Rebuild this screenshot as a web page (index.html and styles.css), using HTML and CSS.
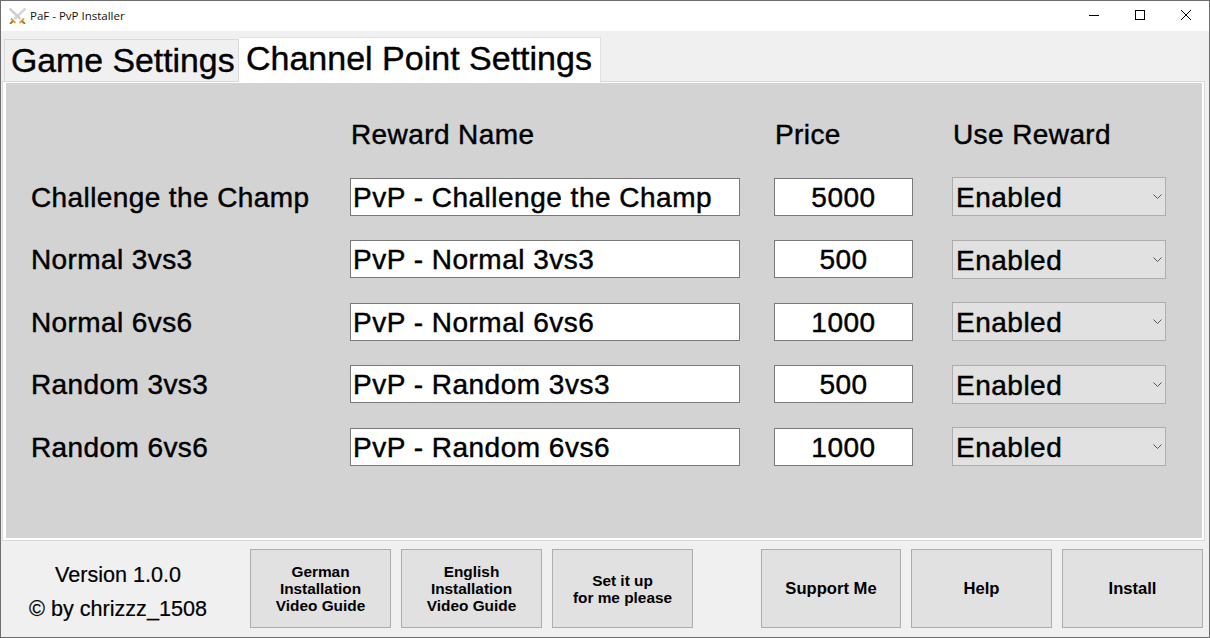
FILE: index.html

```html
<!DOCTYPE html>
<html lang="en">
<head>
  <meta charset="UTF-8">
  <title>PaF - PvP Installer</title>
  <link rel="stylesheet" href="styles.css">
</head>
<body>

  <div class="window">

    <div class="titlebar">
      <svg class="app-icon" width="17" height="16" viewBox="0 0 17 16">
        <path d="M16.5 0.5 L5.5 11" stroke="#d6d6d6" stroke-width="2.6" fill="none"/>
        <path d="M0.5 0.5 L11.5 11" stroke="#cfcfcf" stroke-width="2.6" fill="none"/>
        <path d="M2 10.5 L6.5 15 M15 10.5 L10.5 15" stroke="#dca63a" stroke-width="1.8" fill="none"/>
        <path d="M4 13 L1 16 M13 13 L16 16" stroke="#a9781f" stroke-width="1.8" fill="none"/>
      </svg>
      <span class="title">PaF - PvP Installer</span>
      <div class="win-buttons">
        <svg width="46" height="30" viewBox="0 0 46 30"><path d="M18 14.5 H28" stroke="#000"/></svg>
        <svg width="46" height="30" viewBox="0 0 46 30"><rect x="18.5" y="9.5" width="9" height="9" fill="none" stroke="#000"/></svg>
        <svg width="46" height="30" viewBox="0 0 46 30"><path d="M18 9 L28 19 M28 9 L18 19" stroke="#000" fill="none"/></svg>
      </div>
    </div>

    <div class="tabs">
      <div class="tab">Game Settings</div>
      <div class="tab active">Channel Point Settings</div>
    </div>

    <div class="panel">
      <div class="panel-inner">
        <div class="form-grid">
          <div></div>
          <div class="col-head">Reward Name</div>
          <div class="col-head">Price</div>
          <div class="col-head">Use Reward</div>

          <label class="row-label">Challenge the Champ</label>
          <input class="field" value="PvP - Challenge the Champ">
          <input class="field price" value="5000">
          <div class="select-wrap">
            <select class="select"><option>Enabled</option><option>Disabled</option></select>
            <svg class="chevron" width="9" height="5" viewBox="0 0 9 5"><path d="M0.5 0.5 L4.5 4.5 L8.5 0.5" fill="none" stroke="#555"/></svg>
          </div>

          <label class="row-label">Normal 3vs3</label>
          <input class="field" value="PvP - Normal 3vs3">
          <input class="field price" value="500">
          <div class="select-wrap">
            <select class="select"><option>Enabled</option><option>Disabled</option></select>
            <svg class="chevron" width="9" height="5" viewBox="0 0 9 5"><path d="M0.5 0.5 L4.5 4.5 L8.5 0.5" fill="none" stroke="#555"/></svg>
          </div>

          <label class="row-label">Normal 6vs6</label>
          <input class="field" value="PvP - Normal 6vs6">
          <input class="field price" value="1000">
          <div class="select-wrap">
            <select class="select"><option>Enabled</option><option>Disabled</option></select>
            <svg class="chevron" width="9" height="5" viewBox="0 0 9 5"><path d="M0.5 0.5 L4.5 4.5 L8.5 0.5" fill="none" stroke="#555"/></svg>
          </div>

          <label class="row-label">Random 3vs3</label>
          <input class="field" value="PvP - Random 3vs3">
          <input class="field price" value="500">
          <div class="select-wrap">
            <select class="select"><option>Enabled</option><option>Disabled</option></select>
            <svg class="chevron" width="9" height="5" viewBox="0 0 9 5"><path d="M0.5 0.5 L4.5 4.5 L8.5 0.5" fill="none" stroke="#555"/></svg>
          </div>

          <label class="row-label">Random 6vs6</label>
          <input class="field" value="PvP - Random 6vs6">
          <input class="field price" value="1000">
          <div class="select-wrap">
            <select class="select"><option>Enabled</option><option>Disabled</option></select>
            <svg class="chevron" width="9" height="5" viewBox="0 0 9 5"><path d="M0.5 0.5 L4.5 4.5 L8.5 0.5" fill="none" stroke="#555"/></svg>
          </div>
        </div>
      </div>
    </div>

    <div class="footer">
      <div class="version">
        <div>Version 1.0.0</div>
        <div>© by chrizzz_1508</div>
      </div>
      <button class="btn">German<br>Installation<br>Video Guide</button>
      <button class="btn">English<br>Installation<br>Video Guide</button>
      <button class="btn">Set it up<br>for me please</button>
      <button class="btn big push">Support Me</button>
      <button class="btn big">Help</button>
      <button class="btn big">Install</button>
    </div>

  </div>

</body>
</html>
```

FILE: styles.css

```css
html, body {
  margin: 0;
  padding: 0;
}
body {
  width: 1210px;
  height: 638px;
  overflow: hidden;
  font-family: "Liberation Sans", Arial, sans-serif;
  color: #000;
}
.window {
  box-sizing: border-box;
  width: 1210px;
  height: 638px;
  border: 1px solid #6e6e6e;
  background: #f0f0f0;
  display: flex;
  flex-direction: column;
}

/* title bar */
.titlebar {
  height: 30px;
  background: #fff;
  display: flex;
  align-items: center;
  padding-left: 8px;
}
.app-icon {
  margin-right: 4px;
}
.title {
  font-family: "Open Sans", sans-serif;
  font-size: 11.5px;
  color: #111;
  margin-top: -2px;
}
.win-buttons {
  margin-left: auto;
  display: flex;
}
.win-buttons svg {
  display: block;
}

/* tabs */
.tabs {
  height: 50px;
  display: flex;
  align-items: flex-end;
  padding-left: 3px;
}
.tab {
  box-sizing: border-box;
  height: 43px;
  width: 235px;
  margin-bottom: -1px;
  border: 1px solid #d9d9d9;
  background: #f0f0f0;
  font-size: 33.8px;
  line-height: 41px;
  padding-left: 6px;
  white-space: nowrap;
  -webkit-text-stroke: 0.4px #000;
}
.tab.active {
  position: relative;
  height: 46px;
  width: 362px;
  margin-bottom: -2px;
  background: #fff;
  border-bottom: 0;
  border-left: 0;
  border-color: #e0e0e0;
  font-size: 34px;
  line-height: 41px;
  padding-left: 7px;
}

/* main panel */
.panel {
  margin: 0 4px 0 1px;
  height: 460px;
  box-sizing: border-box;
  border: 1px solid #d9d9d9;
  background: #fff;
  padding: 1px 2px 2px 3px;
}
.panel-inner {
  height: 100%;
  background: #d3d3d3;
  box-sizing: border-box;
  padding: 32px 0 0 25px;
}
.form-grid {
  display: grid;
  grid-template-columns: 319px 424px 178px 214px;
  row-gap: 24.5px;
  grid-auto-rows: 38px;
  align-items: center;
}
.col-head, .row-label {
  font-size: 28px;
  letter-spacing: 0.4px;
  white-space: nowrap;
  -webkit-text-stroke: 0.45px #000;
}
.col-head {
  padding: 1px 0 0 1px;
}
.row-label {
  padding-top: 2px;
}
.field {
  box-sizing: border-box;
  width: 390px;
  height: 38px;
  border: 1px solid #7a7a7a;
  border-radius: 0;
  background: #fff;
  padding: 2px 2px 0;
  margin: 0;
  font-family: "Liberation Sans", Arial, sans-serif;
  font-size: 28px;
  letter-spacing: 0.5px;
  -webkit-text-stroke: 0.45px #000;
  color: #000;
  outline: none;
}
.field.price {
  width: 139px;
  text-align: center;
}
.select-wrap {
  position: relative;
  width: 214px;
  height: 39px;
}
.select {
  appearance: none;
  box-sizing: border-box;
  display: block;
  width: 214px;
  height: 39px;
  border: 1px solid #adadad;
  border-radius: 0;
  background: #e1e1e1;
  padding: 2px 0 0 3px;
  margin: 0;
  font-family: "Liberation Sans", Arial, sans-serif;
  font-size: 28px;
  letter-spacing: 0.5px;
  -webkit-text-stroke: 0.45px #000;
  color: #000;
  outline: none;
}
.chevron {
  position: absolute;
  right: 4px;
  top: 17px;
  pointer-events: none;
}

/* footer */
.footer {
  flex: 1;
  display: flex;
  align-items: flex-start;
  padding: 8px 6px 0 0;
  gap: 10px;
}
.version {
  width: 234px;
  margin-right: 5px;
  font-size: 21.6px;
  line-height: 34px;
  text-align: center;
  padding-top: 9px;
  -webkit-text-stroke: 0.2px #000;
}
.btn {
  box-sizing: border-box;
  width: 141px;
  height: 79px;
  border: 1px solid #adadad;
  border-radius: 0;
  background: #e1e1e1;
  padding: 0;
  font-family: "Liberation Sans", Arial, sans-serif;
  font-size: 15.4px;
  font-weight: bold;
  line-height: 17px;
  color: #000;
}
.btn.big {
  font-size: 16.6px;
}
.btn.push {
  width: 140px;
  margin-left: 58px;
}
```
